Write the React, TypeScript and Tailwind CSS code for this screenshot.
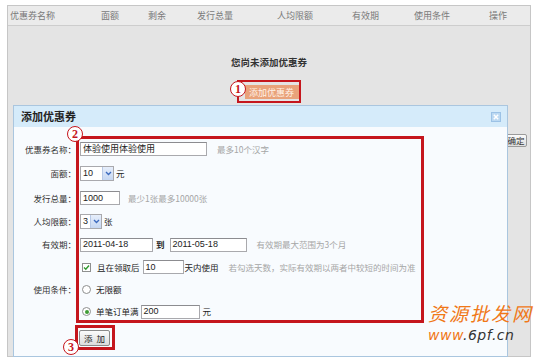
import React from 'react';

const cjk = { fontFamily: '"Noto Sans CJK SC", "Liberation Sans", sans-serif' };

const Circled: React.FC<{ n: string; className: string }> = ({ n, className }) => (
  <div
    className={`absolute w-[16px] h-[16px] rounded-full border-[1.5px] border-[#c5161d] bg-white flex items-center justify-center text-[12px] font-bold leading-none text-[#c5161d] ${className}`}
    style={{ fontFamily: '"Liberation Serif", serif' }}
  >
    {n}
  </div>
);

const Label: React.FC<{ text?: string }> = ({ text }) => (
  <div className="w-[62px] text-right text-[8.5px] text-[#333] shrink-0">{text ? text + '：' : ''}</div>
);

const Input: React.FC<{ value: string; w: string; cls?: string }> = ({ value, w, cls }) => (
  <div
    className={`h-[14px] ${w} ${cls ?? ''} border border-[#a9a9ad] border-t-[#8c8c90] bg-white flex items-center pl-[2px] text-[9px] text-[#222] leading-none`}
    style={{ fontFamily: '"Liberation Sans", "Noto Sans CJK SC", sans-serif' }}
  >
    {value}
  </div>
);

const Select: React.FC<{ value: string; w: string }> = ({ value, w }) => (
  <div
    className={`h-[15px] ${w} border border-[#a9a9ad] bg-white flex items-center justify-between text-[9px] text-[#222] leading-none`}
    style={{ fontFamily: '"Liberation Sans", sans-serif' }}
  >
    <span className="pl-[2px]">{value}</span>
    <span className="w-[11px] h-[13px] bg-gradient-to-b from-[#e6eefb] to-[#c6d7f2] border-l border-[#b8c9e6] flex items-center justify-center">
      <svg width="7" height="5" viewBox="0 0 7 5">
        <path d="M1 1 L3.5 3.5 L6 1" fill="none" stroke="#3d6bbf" strokeWidth="1.4" />
      </svg>
    </span>
  </div>
);

const Hint: React.FC<{ text: string; cls?: string }> = ({ text, cls }) => (
  <span className={`text-[8.5px] text-[#a6a6a6] ${cls ?? ''}`}>{text}</span>
);

const Radio: React.FC<{ checked?: boolean }> = ({ checked }) => (
  <span className="w-[9px] h-[9px] ml-[2px] rounded-full border border-[#8e8f8f] bg-white flex items-center justify-center shrink-0">
    {checked && <span className="w-[4px] h-[4px] rounded-full bg-[#3f9c35]" />}
  </span>
);

export default function App() {
  const cols: [string, string][] = [
    ['优惠券名称', 'w-[91px]'],
    ['面额', 'w-[47px]'],
    ['剩余', 'w-[49px]'],
    ['发行总量', 'w-[80px]'],
    ['人均限额', 'w-[75px]'],
    ['有效期', 'w-[62px]'],
    ['使用条件', 'w-[75px]'],
    ['操作', 'flex-1'],
  ];

  return (
    <div className="relative w-[543px] h-[363px] bg-white overflow-hidden" style={cjk}>
      <div className="ml-[7px] mt-[5px] w-[524px] h-[352px] border border-[#c6c6c6] bg-[#e4e4e4] flex flex-col">
        <div className="h-[20px] bg-[#ebebeb] border-b border-[#cdcdcd] flex items-center pl-[2px] text-[9px] text-[#7a7a7a]">
          {cols.map(([t, w]) => (
            <div key={t} className={w}>{t}</div>
          ))}
        </div>
        <div className="flex flex-col items-center">
          <div className="mt-[30px] text-[9.5px] font-bold text-[#333] leading-[12px]">您尚未添加优惠券</div>
          <div className="mt-[17px] ml-[5px] w-[54px] h-[14px] bg-[#e9a27a] text-[#fff3e8] text-[9px] flex items-center justify-center leading-none">
            添加优惠券
          </div>
        </div>
        <div className="flex justify-end pr-[3px] mt-[35px]">
          <div className="w-[22px] h-[13px] border border-[#9a9a9a] rounded-[2px] bg-gradient-to-b from-[#fafafa] to-[#dedede] text-[8.5px] text-[#333] flex items-center justify-center leading-none">
            确定
          </div>
        </div>
      </div>

      {/* dialog */}
      <div className="absolute left-[13px] top-[105px] w-[495px] h-[252px] border border-[#aac6df] bg-[#f8fbfe] flex flex-col">
        <div className="h-[21px] bg-[#d5ebfa] flex items-center justify-between pl-[7px] pr-[6px]">
          <span className="text-[11px] font-bold text-[#222]">添加优惠券</span>
          <svg width="10" height="10" viewBox="0 0 10 10">
            <rect x="0.5" y="0.5" width="9" height="9" fill="#bcd9f2" stroke="#9cc2e6" />
            <path d="M2.8 2.8 L7.2 7.2 M7.2 2.8 L2.8 7.2" stroke="#ffffff" strokeWidth="1.5" />
          </svg>
        </div>
        <div className="pt-[10px] flex flex-col">
          <div className="flex items-center h-[24px]">
            <Label text="优惠券名称" />
            <div className="flex items-center pl-[4px]">
              <Input value="体验使用体验使用" w="w-[127px]" cls="text-[8.5px]" />
              <Hint text="最多10个汉字" cls="ml-[10px]" />
            </div>
          </div>
          <div className="flex items-center h-[25px]">
            <Label text="面额" />
            <div className="flex items-center pl-[4px] text-[8.5px] text-[#222]">
              <Select value="10" w="w-[34px]" />
              <span className="ml-[2px]">元</span>
            </div>
          </div>
          <div className="flex items-center h-[24px]">
            <Label text="发行总量" />
            <div className="flex items-center pl-[4px]">
              <Input value="1000" w="w-[40px]" />
              <Hint text="最少1张最多10000张" cls="ml-[8px]" />
            </div>
          </div>
          <div className="flex items-center h-[23px]">
            <Label text="人均限额" />
            <div className="flex items-center pl-[4px] text-[8.5px] text-[#222]">
              <Select value="3" w="w-[22px]" />
              <span className="ml-[2px]">张</span>
            </div>
          </div>
          <div className="flex items-center h-[23px]">
            <Label text="有效期" />
            <div className="flex items-center pl-[4px] text-[8.5px] text-[#222]">
              <Input value="2011-04-18" w="w-[73px]" />
              <span className="ml-[3px] font-bold">到</span>
              <Input value="2011-05-18" w="w-[77px]" cls="ml-[5px]" />
              <Hint text="有效期最大范围为3个月" cls="ml-[10px]" />
            </div>
          </div>
          <div className="flex items-center h-[22px]">
            <Label />
            <div className="flex items-center pl-[4px] text-[8.5px] text-[#222]">
              <span className="ml-[2px] w-[9px] h-[9px] border border-[#8e8f8f] bg-white flex items-center justify-center">
                <svg width="7" height="7" viewBox="0 0 7 7">
                  <path d="M1 3.5 L2.8 5.3 L6 1.5" fill="none" stroke="#2f9a2f" strokeWidth="1.4" />
                </svg>
              </span>
              <span className="ml-[6px]">且在领取后</span>
              <Input value="10" w="w-[41px]" cls="ml-[3px]" />
              <span className="ml-[1px]">天内使用</span>
              <Hint text="若勾选天数，实际有效期以两者中较短的时间为准" cls="ml-[10px]" />
            </div>
          </div>
          <div className="flex items-center h-[23px]">
            <Label text="使用条件" />
            <div className="flex items-center pl-[4px] text-[8.5px] text-[#222]">
              <Radio />
              <span className="ml-[5px]">无限额</span>
            </div>
          </div>
          <div className="flex items-center h-[21px]">
            <Label />
            <div className="flex items-center pl-[4px] text-[8.5px] text-[#222]">
              <Radio checked />
              <span className="ml-[5px]">单笔订单满</span>
              <Input value="200" w="w-[59px]" cls="ml-[2px]" />
              <span className="ml-[3px]">元</span>
            </div>
          </div>
          <div className="flex items-center mt-[8px]">
            <Label />
            <div className="pl-[3px]">
              <div className="w-[31px] h-[16px] border border-[#8a8a8a] rounded-[2px] bg-gradient-to-b from-[#fbfbfb] to-[#dcdcdc] text-[8.5px] text-[#222] flex items-center justify-center gap-[4px] leading-none">
                <span>添</span>
                <span>加</span>
              </div>
            </div>
          </div>
        </div>
      </div>

      {/* annotations */}
      <div className="absolute left-[237px] top-[80px] w-[64px] h-[23px] border-2 border-[#c5161d]" />
      <Circled n="1" className="left-[230px] top-[81px]" />
      <div className="absolute left-[76px] top-[136px] w-[348px] h-[187px] border-[3px] border-[#c5161d]" />
      <Circled n="2" className="left-[67px] top-[126px]" />
      <div className="absolute left-[75px] top-[325px] w-[40px] h-[25px] border-[3px] border-[#c5161d]" />
      <Circled n="3" className="left-[63px] top-[339px]" />

      {/* watermark */}
      <div className="absolute left-[428px] top-[303px] flex flex-col leading-none">
        <span className="text-[19px] text-[#f07818] tracking-[2px] italic">资源批发网</span>
        <span className="mt-[6px] text-[14px] italic tracking-[0.5px]" style={{ fontFamily: '"DejaVu Sans", sans-serif' }}>
          <span className="text-[#f07818]">www</span>
          <span className="text-[#333]">.6pf.cn</span>
        </span>
      </div>
    </div>
  );
}
